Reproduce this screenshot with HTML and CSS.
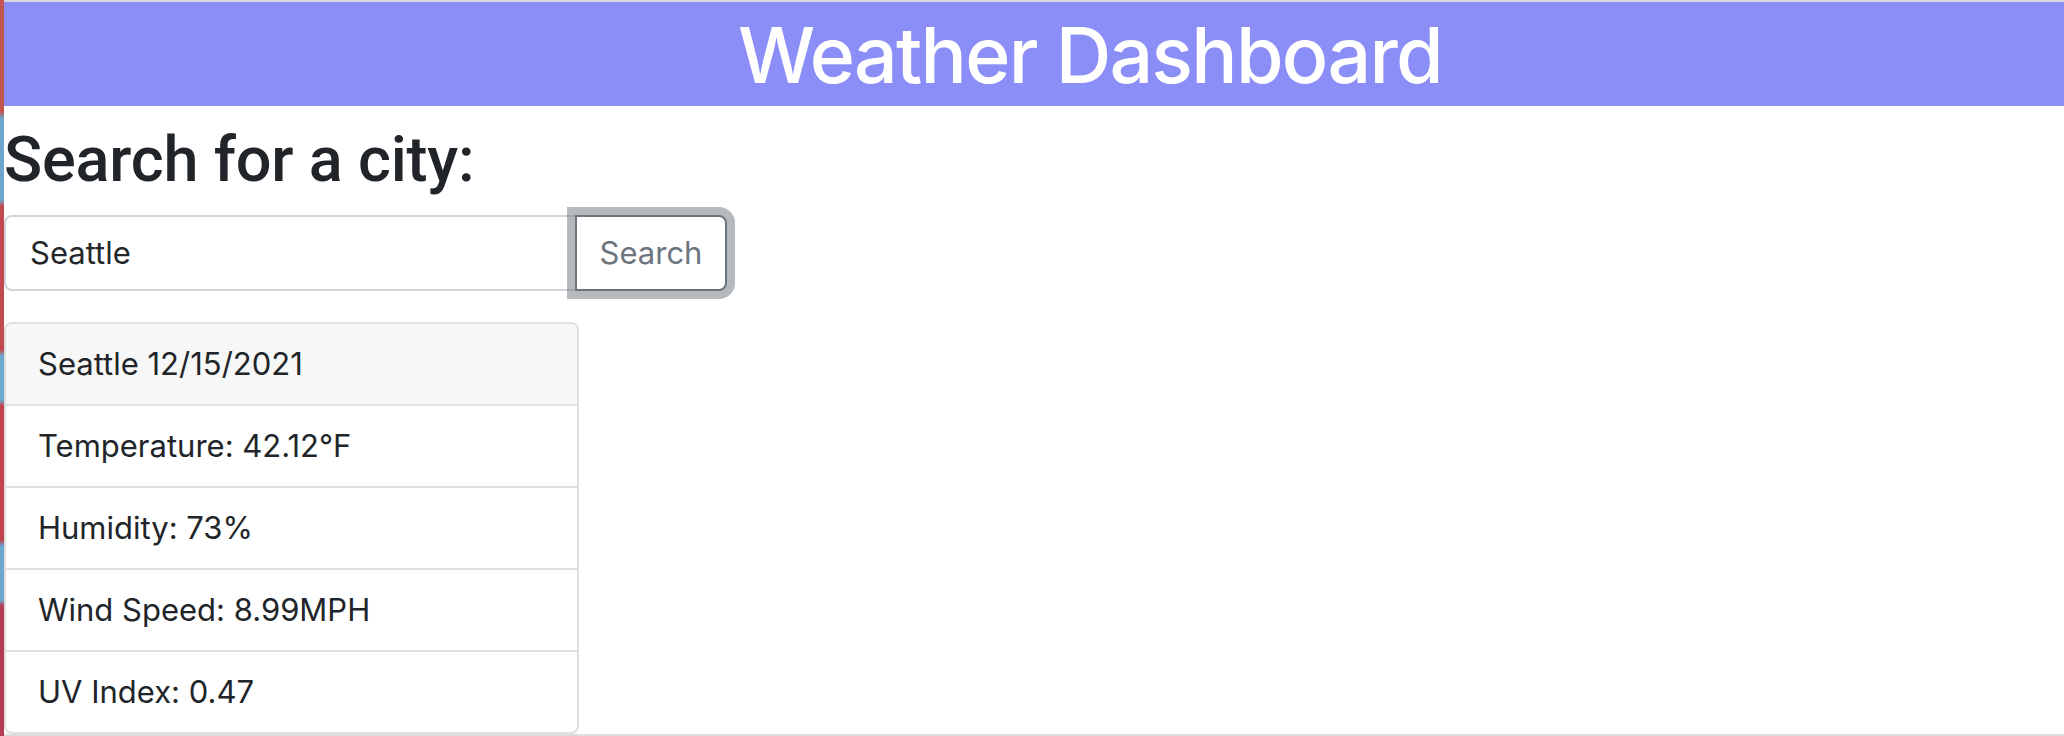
FILE: index.html
```html
<!DOCTYPE html>
<html lang="en">
<head>
<meta charset="utf-8">
<title>Weather Dashboard</title>
<link rel="stylesheet" href="styles.css">
</head>
<body>
<div class="desktop">
  <div class="wallpaper"></div>
  <div class="window">
    <header class="topbar">
      <h1 class="title">Weather Dashboard</h1>
    </header>
    <main class="content">
      <h2 class="search-title">Search for a city:</h2>
      <form class="search">
        <input class="search-input" type="text" value="Seattle">
        <button class="search-btn" type="button">Search</button>
      </form>
      <div class="card">
        <div class="card-header">Seattle 12/15/2021</div>
        <ul class="card-list">
          <li class="card-item">Temperature: 42.12°F</li>
          <li class="card-item">Humidity: 73%</li>
          <li class="card-item">Wind Speed: 8.99MPH</li>
          <li class="card-item">UV Index: 0.47</li>
        </ul>
      </div>
    </main>
  </div>
</div>
</body>
</html>
```

FILE: styles.css
```css
* { box-sizing: border-box; }

html, body {
  margin: 0;
  padding: 0;
  background: #ffffff;
}

body {
  font-family: Inter, "Liberation Sans", Arial, sans-serif;
  color: #212529;
}

.desktop {
  display: flex;
  height: 736px;
  overflow: hidden;
}

.wallpaper {
  flex: 0 0 4px;
  background: linear-gradient(to bottom,
    #c4544f 0px, #c4544f 112px,
    #6da7cf 118px, #6da7cf 200px,
    #c24a4e 206px, #c24a4e 350px,
    #6ea9d2 356px, #6ea9d2 400px,
    #c3424f 406px, #c3424f 540px,
    #6da7cf 546px, #6da7cf 600px,
    #b73a55 606px, #b73a55 736px);
}

.window {
  flex: 0 0 2172px;
  display: flex;
  flex-direction: column;
  border-top: 2px solid #d8d8d8;
  border-bottom: 2px solid #dcdcdc;
  background: #ffffff;
}

.topbar {
  height: 104px;
  padding-top: 3px;
  background: #8b8ef7;
}

.title {
  margin: 0;
  font-size: 77px;
  line-height: 100px;
  font-weight: 500;
  letter-spacing: -1.7px;
  color: #ffffff;
  text-align: center;
}

.content {
  flex: 1;
  display: flex;
  flex-direction: column;
  align-items: flex-start;
}

.search-title {
  margin: 16px 0 16px 0;
  font-family: Roboto, Inter, "Liberation Sans", sans-serif;
  font-weight: 500;
  font-size: 63px;
  line-height: 76.8px;
  letter-spacing: -0.2px;
  color: #212529;
}

.search {
  display: flex;
  width: 723px;
  height: 76px;
  margin: 0;
}

.search-input {
  flex: 1;
  min-width: 0;
  height: 76px;
  padding: 12px 24px;
  border: 2px solid #ced4da;
  border-right: none;
  border-radius: 8px 0 0 8px;
  font-family: Inter, "Liberation Sans", Arial, sans-serif;
  font-size: 31px;
  line-height: 48px;
  color: #24282c;
  background: #ffffff;
  outline: none;
}

.search-btn {
  flex: 0 0 152px;
  height: 76px;
  padding: 12px 20px;
  border: 2px solid #6c757d;
  border-radius: 0 8px 8px 0;
  background: #ffffff;
  color: #6c757d;
  font-family: Inter, "Liberation Sans", Arial, sans-serif;
  font-size: 31px;
  line-height: 48px;
  box-shadow: 0 0 0 8px rgba(108, 117, 125, 0.5);
  position: relative;
  z-index: 2;
}

.card {
  width: 575px;
  margin-top: 31px;
  border: 2px solid #dfdfdf;
  border-radius: 8px;
  overflow: hidden;
  font-size: 31px;
  line-height: 48px;
  color: #212529;
}

.card-header {
  padding: 16px 32px;
  background: #f7f7f7;
}

.card-list {
  list-style: none;
  margin: 0;
  padding: 0;
}

.card-item {
  padding: 16px 32px;
  border-top: 2px solid #dfdfdf;
}
```
